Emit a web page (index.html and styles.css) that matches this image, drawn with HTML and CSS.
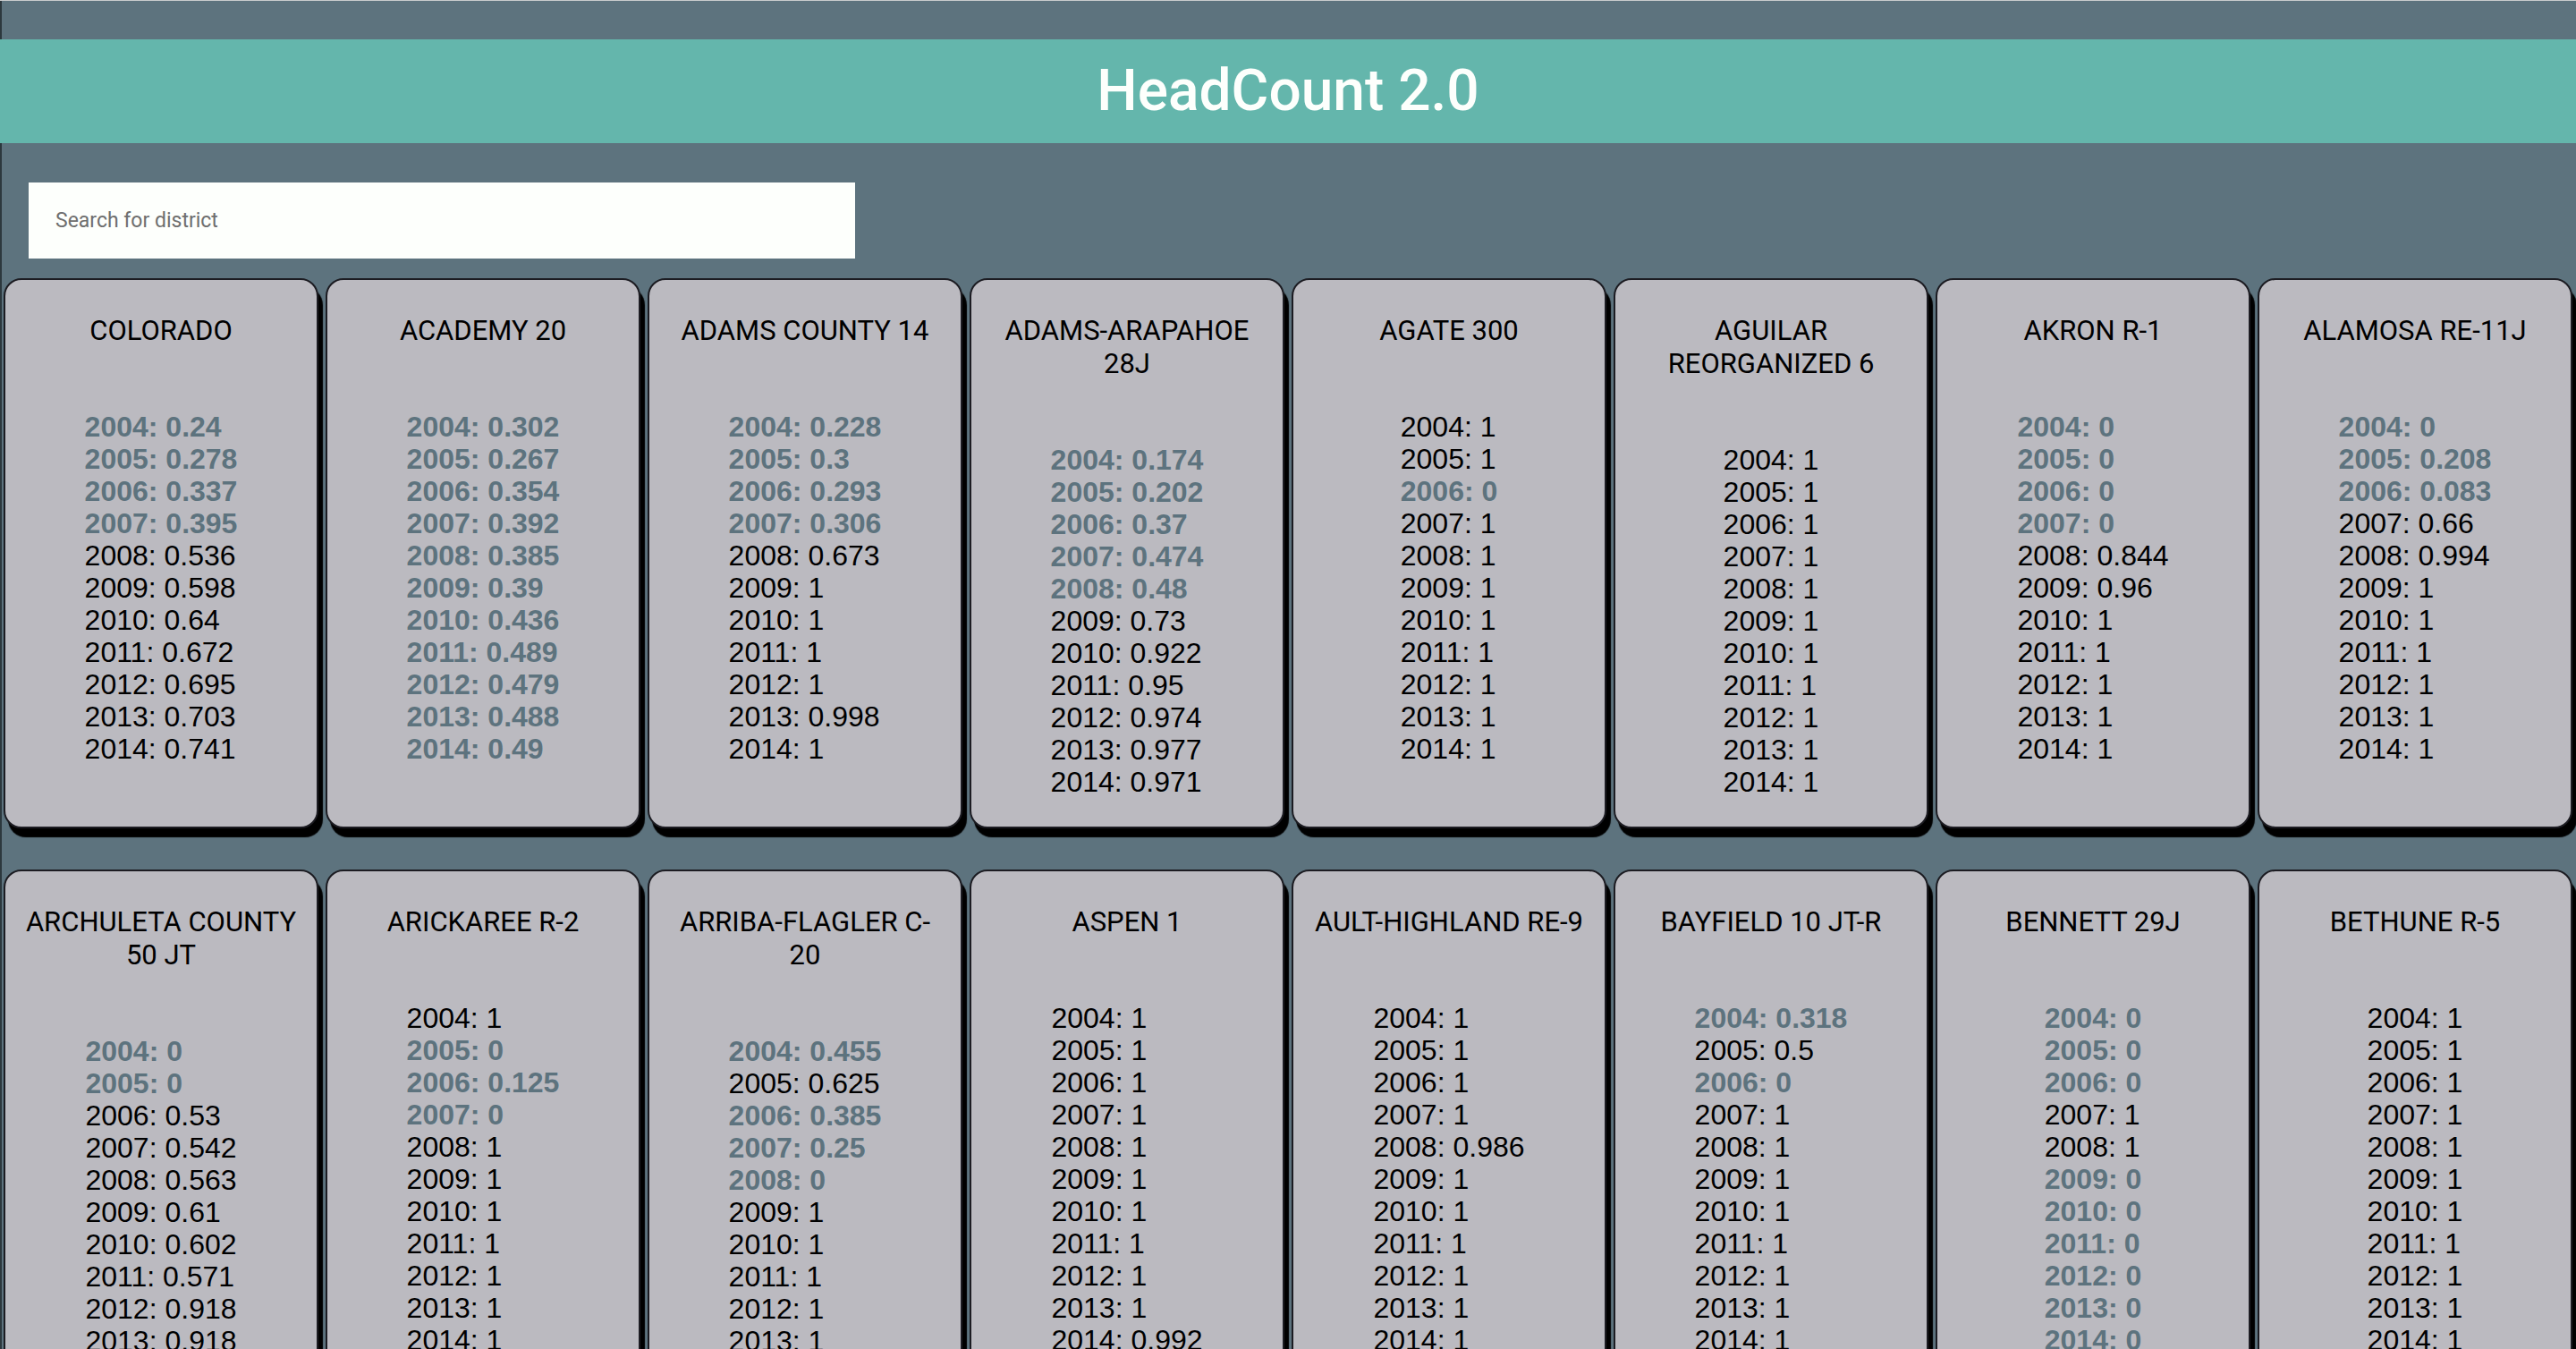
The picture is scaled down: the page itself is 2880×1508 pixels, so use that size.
FILE: index.html
```html
<!DOCTYPE html>
<html lang="en">
<head>
<meta charset="utf-8">
<title>HeadCount 2.0</title>
<link rel="stylesheet" href="styles.css">
</head>
<body>
<header class="app-header"><h1 class="app-title">HeadCount 2.0</h1></header>
<div class="search-row"><input class="search" type="text" placeholder="Search for district"></div>
<main class="cards">
  <section class="card"><h2 class="card-title">COLORADO</h2><div class="stats"><ul class="years">
    <li class="low">2004: 0.24</li><li class="low">2005: 0.278</li><li class="low">2006: 0.337</li><li class="low">2007: 0.395</li><li>2008: 0.536</li><li>2009: 0.598</li><li>2010: 0.64</li><li>2011: 0.672</li><li>2012: 0.695</li><li>2013: 0.703</li><li>2014: 0.741</li></ul></div></section>
  <section class="card"><h2 class="card-title">ACADEMY 20</h2><div class="stats"><ul class="years">
    <li class="low">2004: 0.302</li><li class="low">2005: 0.267</li><li class="low">2006: 0.354</li><li class="low">2007: 0.392</li><li class="low">2008: 0.385</li><li class="low">2009: 0.39</li><li class="low">2010: 0.436</li><li class="low">2011: 0.489</li><li class="low">2012: 0.479</li><li class="low">2013: 0.488</li><li class="low">2014: 0.49</li></ul></div></section>
  <section class="card"><h2 class="card-title">ADAMS COUNTY 14</h2><div class="stats"><ul class="years">
    <li class="low">2004: 0.228</li><li class="low">2005: 0.3</li><li class="low">2006: 0.293</li><li class="low">2007: 0.306</li><li>2008: 0.673</li><li>2009: 1</li><li>2010: 1</li><li>2011: 1</li><li>2012: 1</li><li>2013: 0.998</li><li>2014: 1</li></ul></div></section>
  <section class="card"><h2 class="card-title">ADAMS-ARAPAHOE 28J</h2><div class="stats"><ul class="years">
    <li class="low">2004: 0.174</li><li class="low">2005: 0.202</li><li class="low">2006: 0.37</li><li class="low">2007: 0.474</li><li class="low">2008: 0.48</li><li>2009: 0.73</li><li>2010: 0.922</li><li>2011: 0.95</li><li>2012: 0.974</li><li>2013: 0.977</li><li>2014: 0.971</li></ul></div></section>
  <section class="card"><h2 class="card-title">AGATE 300</h2><div class="stats"><ul class="years">
    <li>2004: 1</li><li>2005: 1</li><li class="low">2006: 0</li><li>2007: 1</li><li>2008: 1</li><li>2009: 1</li><li>2010: 1</li><li>2011: 1</li><li>2012: 1</li><li>2013: 1</li><li>2014: 1</li></ul></div></section>
  <section class="card"><h2 class="card-title">AGUILAR REORGANIZED 6</h2><div class="stats"><ul class="years">
    <li>2004: 1</li><li>2005: 1</li><li>2006: 1</li><li>2007: 1</li><li>2008: 1</li><li>2009: 1</li><li>2010: 1</li><li>2011: 1</li><li>2012: 1</li><li>2013: 1</li><li>2014: 1</li></ul></div></section>
  <section class="card"><h2 class="card-title">AKRON R-1</h2><div class="stats"><ul class="years">
    <li class="low">2004: 0</li><li class="low">2005: 0</li><li class="low">2006: 0</li><li class="low">2007: 0</li><li>2008: 0.844</li><li>2009: 0.96</li><li>2010: 1</li><li>2011: 1</li><li>2012: 1</li><li>2013: 1</li><li>2014: 1</li></ul></div></section>
  <section class="card"><h2 class="card-title">ALAMOSA RE-11J</h2><div class="stats"><ul class="years">
    <li class="low">2004: 0</li><li class="low">2005: 0.208</li><li class="low">2006: 0.083</li><li>2007: 0.66</li><li>2008: 0.994</li><li>2009: 1</li><li>2010: 1</li><li>2011: 1</li><li>2012: 1</li><li>2013: 1</li><li>2014: 1</li></ul></div></section>

  <section class="card"><h2 class="card-title">ARCHULETA COUNTY 50 JT</h2><div class="stats"><ul class="years">
    <li class="low">2004: 0</li><li class="low">2005: 0</li><li>2006: 0.53</li><li>2007: 0.542</li><li>2008: 0.563</li><li>2009: 0.61</li><li>2010: 0.602</li><li>2011: 0.571</li><li>2012: 0.918</li><li>2013: 0.918</li><li>2014: 0.926</li></ul></div></section>
  <section class="card"><h2 class="card-title">ARICKAREE R-2</h2><div class="stats"><ul class="years">
    <li>2004: 1</li><li class="low">2005: 0</li><li class="low">2006: 0.125</li><li class="low">2007: 0</li><li>2008: 1</li><li>2009: 1</li><li>2010: 1</li><li>2011: 1</li><li>2012: 1</li><li>2013: 1</li><li>2014: 1</li></ul></div></section>
  <section class="card"><h2 class="card-title">ARRIBA-FLAGLER C-20</h2><div class="stats"><ul class="years">
    <li class="low">2004: 0.455</li><li>2005: 0.625</li><li class="low">2006: 0.385</li><li class="low">2007: 0.25</li><li class="low">2008: 0</li><li>2009: 1</li><li>2010: 1</li><li>2011: 1</li><li>2012: 1</li><li>2013: 1</li><li>2014: 1</li></ul></div></section>
  <section class="card"><h2 class="card-title">ASPEN 1</h2><div class="stats"><ul class="years">
    <li>2004: 1</li><li>2005: 1</li><li>2006: 1</li><li>2007: 1</li><li>2008: 1</li><li>2009: 1</li><li>2010: 1</li><li>2011: 1</li><li>2012: 1</li><li>2013: 1</li><li>2014: 0.992</li></ul></div></section>
  <section class="card"><h2 class="card-title">AULT-HIGHLAND RE-9</h2><div class="stats"><ul class="years">
    <li>2004: 1</li><li>2005: 1</li><li>2006: 1</li><li>2007: 1</li><li>2008: 0.986</li><li>2009: 1</li><li>2010: 1</li><li>2011: 1</li><li>2012: 1</li><li>2013: 1</li><li>2014: 1</li></ul></div></section>
  <section class="card"><h2 class="card-title">BAYFIELD 10 JT-R</h2><div class="stats"><ul class="years">
    <li class="low">2004: 0.318</li><li>2005: 0.5</li><li class="low">2006: 0</li><li>2007: 1</li><li>2008: 1</li><li>2009: 1</li><li>2010: 1</li><li>2011: 1</li><li>2012: 1</li><li>2013: 1</li><li>2014: 1</li></ul></div></section>
  <section class="card"><h2 class="card-title">BENNETT 29J</h2><div class="stats"><ul class="years">
    <li class="low">2004: 0</li><li class="low">2005: 0</li><li class="low">2006: 0</li><li>2007: 1</li><li>2008: 1</li><li class="low">2009: 0</li><li class="low">2010: 0</li><li class="low">2011: 0</li><li class="low">2012: 0</li><li class="low">2013: 0</li><li class="low">2014: 0</li></ul></div></section>
  <section class="card"><h2 class="card-title">BETHUNE R-5</h2><div class="stats"><ul class="years">
    <li>2004: 1</li><li>2005: 1</li><li>2006: 1</li><li>2007: 1</li><li>2008: 1</li><li>2009: 1</li><li>2010: 1</li><li>2011: 1</li><li>2012: 1</li><li>2013: 1</li><li>2014: 1</li></ul></div></section>
</main>
</body>
</html>
```

FILE: styles.css
```css
html {
  background: linear-gradient(to right, #2c383d 0, #2c383d 2px, #5d737e 2px) #5d737e;
}

body {
  margin: 0;
  border-top: 1px solid #c9ccce;
  min-height: 100vh;
  font-family: "Liberation Sans", Arial, sans-serif;
  color: #000;
}

.app-header {
  margin-top: 43px;
  height: 116px;
  background: #64b6ac;
  display: flex;
  align-items: center;
  justify-content: center;
}

.app-title {
  margin: 0;
  font-family: Roboto, "Liberation Sans", sans-serif;
  font-weight: 500;
  font-size: 64px;
  line-height: 1;
  color: #fdfffc;
}

.search-row {
  padding: 44px 0 22px 32px;
}

.search {
  display: block;
  box-sizing: border-box;
  width: 924px;
  height: 85px;
  margin: 0;
  padding: 0 30px;
  border: none;
  outline: none;
  background: #fdfffc;
  font-family: Roboto, "Liberation Sans", sans-serif;
  font-size: 23px;
  color: #333;
}

.search::placeholder {
  color: #6f6f6f;
}

.cards {
  display: flex;
  flex-wrap: wrap;
  align-items: stretch;
}

.card {
  box-sizing: border-box;
  width: 352px;
  margin: 0 4px 46px;
  padding: 38px 17px 32px;
  background: #bbbac0;
  border: 2px solid #1c1c22;
  border-radius: 20px;
  box-shadow: 5px 10px 1px #000;
  text-align: center;
}

.card-title {
  margin: 0 0 71px;
  font-family: Roboto, "Liberation Sans", sans-serif;
  font-weight: 400;
  font-size: 31px;
  line-height: 37px;
  color: #000;
}

.stats {
  display: flex;
  justify-content: center;
}

.years {
  margin: 0;
  padding: 0;
  list-style: none;
  text-align: left;
  font-size: 32px;
  line-height: 36px;
}

.years .low {
  color: #5d737e;
  font-weight: 700;
}
```
